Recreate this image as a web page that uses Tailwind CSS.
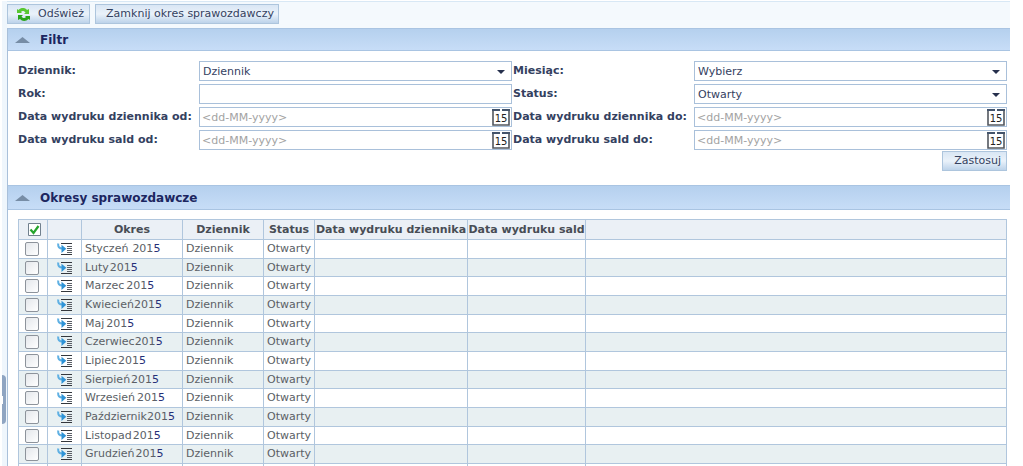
<!DOCTYPE html>
<html lang="pl">
<head>
<meta charset="utf-8">
<title>Okresy sprawozdawcze</title>
<script src="https://cdn.jsdelivr.net/npm/@tailwindcss/browser@4"></script>
</head>
<body class="h-screen overflow-hidden bg-white pt-px pr-[13px] pl-[2px] font-['DejaVu_Sans',sans-serif] text-[11px] leading-[14px] text-[#34415f]">
<svg class="hidden">
  <symbol id="details" viewBox="0 0 16 14">
    <path d="M4 1.500h11M4 12.500h11" stroke="#33373d" stroke-width="1"/>
    <path d="M10 4.500h5M10 6.500h5M10 8.500h5M10 10.500h5" stroke="#5a5f66" stroke-width="1"/>
    <path d="M1.300 1.500Q.5 6.500 5.500 6.500" fill="none" stroke="#5fb0e3" stroke-width="2"/>
    <path d="M4.500 2.800 9.300 6.700 4.500 11z" fill="#2f93d6"/>
  </symbol>
  <symbol id="calendar" viewBox="0 0 18 18">
    <path d="M1 2h16v15H1z" fill="#fff" stroke="#53585f" stroke-width="1.600"/>
    <path d="M0 1h8v2H0zM10 1h8v2h-8z" fill="#44546b"/>
    <path d="M8 0h2v3H8z" fill="#fff"/>
    <text x="9" y="14" text-anchor="middle" font-family="DejaVu Sans" font-size="10" fill="#222">15</text>
  </symbol>
  <symbol id="caret" viewBox="0 0 8 4"><path d="M0 0h8L4 4z" fill="#26304d"/></symbol>
</svg>
<div class="relative flex h-full flex-col border-l-[5px] border-[#eff6fc]">
  <button type="button" aria-label="Zwiń panel" class="absolute top-[374px] -left-[5px] flex h-[49px] w-[4px] items-center rounded-r-sm bg-[#8fa5c2]"><span class="h-[8px] w-px bg-white"></span></button>
  <div class="flex h-[27px] shrink-0 gap-[5px] border-t border-[#d8e8f5] bg-[#f4f9fd] pt-[2px]">
    <button type="button" class="flex h-[20px] w-[83px] items-center border border-[#adc5dd] bg-linear-to-b from-[#d9e6f4] via-[#eaf2fa] to-[#bdd3ea] pl-[9px]">
      <svg class="mr-[8px] h-[13px] w-[13px] shrink-0" viewBox="0 0 13 13"><path d="M0 5V1l1.500 1C4-.6 8-.4 10 2l2-1v5H7l1.500-1.500C7 2.500 5 2.500 4 4l1 1z" fill="#58c832"/><path d="M13 8v4l-1.500-1C9 13.600 5 13.400 3 11l-2 1V7h5L4.500 8.500C6 10.500 8 10.500 9 9L8 8z" fill="#2ba51c"/></svg>Odśwież
    </button>
    <button type="button" class="h-[20px] w-[184px] border border-[#adc5dd] bg-linear-to-b from-[#d9e6f4] via-[#eaf2fa] to-[#bdd3ea] pl-[6px] whitespace-nowrap">Zamknij okres sprawozdawczy</button>
  </div>
  <main class="min-h-0 flex-1 border-l border-[#a9c0da]">
    <section>
      <h2 class="flex h-[23px] items-center border-y border-[#a9c4e2] bg-linear-to-b from-[#b5d0ee] to-[#c7ddf7] pl-[7px] text-[12px] font-bold text-[#1c2660]">
        <svg class="mr-[10px] h-[6px] w-[15px]" viewBox="0 0 15 6"><path d="M0 6 7.500 0 15 6z" fill="#778da6"/></svg>Filtr
      </h2>
      <form class="pt-[10px] pr-[3px] pb-[14px] pl-[10px]">
        <div class="grid grid-cols-[181px_1fr_182px_1fr] gap-y-[3px]">
          <label for="journal" class="pt-[3px] font-bold">Dziennik:</label>
          <div class="relative"><select id="journal" class="block h-[20px] w-full appearance-none border border-[#a9c0da] bg-white px-[3px] pt-[2px]"><option>Dziennik</option></select><svg class="pointer-events-none absolute top-[9px] right-[7px] h-[4px] w-[8px]"><use href="#caret"/></svg></div>
          <label for="month" class="pt-[3px] pl-px font-bold">Miesiąc:</label>
          <div class="relative"><select id="month" class="block h-[20px] w-full appearance-none border border-[#a9c0da] bg-white px-[3px] pt-[2px]"><option>Wybierz</option></select><svg class="pointer-events-none absolute top-[9px] right-[7px] h-[4px] w-[8px]"><use href="#caret"/></svg></div>
          <label for="year" class="pt-[3px] font-bold">Rok:</label>
          <input id="year" type="text" class="h-[20px] w-full border border-[#a9c0da] px-[3px]">
          <label for="status" class="pt-[3px] pl-px font-bold">Status:</label>
          <div class="relative"><select id="status" class="block h-[20px] w-full appearance-none border border-[#a9c0da] bg-white px-[3px] pt-[2px]"><option>Otwarty</option></select><svg class="pointer-events-none absolute top-[9px] right-[7px] h-[4px] w-[8px]"><use href="#caret"/></svg></div>
          <label for="jfrom" class="pt-[3px] font-bold">Data wydruku dziennika od:</label>
          <div class="flex h-[20px] items-center border border-[#a9c0da]"><input id="jfrom" type="text" placeholder="&lt;dd-MM-yyyy&gt;" class="min-w-0 flex-1 pt-px pl-[2px] placeholder:text-[#a3a3a3]"><button type="button" aria-label="Kalendarz" class="mr-px"><svg class="block h-[18px] w-[18px]"><use href="#calendar"/></svg></button></div>
          <label for="jto" class="pt-[3px] pl-px font-bold">Data wydruku dziennika do:</label>
          <div class="flex h-[20px] items-center border border-[#a9c0da]"><input id="jto" type="text" placeholder="&lt;dd-MM-yyyy&gt;" class="min-w-0 flex-1 pt-px pl-[2px] placeholder:text-[#a3a3a3]"><button type="button" aria-label="Kalendarz" class="mr-px"><svg class="block h-[18px] w-[18px]"><use href="#calendar"/></svg></button></div>
          <label for="bfrom" class="pt-[3px] font-bold">Data wydruku sald od:</label>
          <div class="flex h-[20px] items-center border border-[#a9c0da]"><input id="bfrom" type="text" placeholder="&lt;dd-MM-yyyy&gt;" class="min-w-0 flex-1 pt-px pl-[2px] placeholder:text-[#a3a3a3]"><button type="button" aria-label="Kalendarz" class="mr-px"><svg class="block h-[18px] w-[18px]"><use href="#calendar"/></svg></button></div>
          <label for="bto" class="pt-[3px] pl-px font-bold">Data wydruku sald do:</label>
          <div class="flex h-[20px] items-center border border-[#a9c0da]"><input id="bto" type="text" placeholder="&lt;dd-MM-yyyy&gt;" class="min-w-0 flex-1 pt-px pl-[2px] placeholder:text-[#a3a3a3]"><button type="button" aria-label="Kalendarz" class="mr-px"><svg class="block h-[18px] w-[18px]"><use href="#calendar"/></svg></button></div>
        </div>
        <button type="submit" class="mt-px ml-auto block h-[20px] border border-[#adc5dd] bg-linear-to-b from-[#d9e6f4] via-[#eaf2fa] to-[#bdd3ea] pr-[5px] pl-[11px]">Zastosuj</button>
      </form>
    </section>
    <section>
      <h2 class="flex h-[25px] items-center border-y border-[#a9c4e2] bg-linear-to-b from-[#b5d0ee] to-[#c7ddf7] pl-[7px] text-[12px] font-bold text-[#1c2660]">
        <svg class="mr-[10px] h-[6px] w-[15px]" viewBox="0 0 15 6"><path d="M0 6 7.500 0 15 6z" fill="#778da6"/></svg>Okresy sprawozdawcze
      </h2>
      <div class="pt-[9px] pr-[3px] pl-[10px]">
        <table class="w-full table-fixed border-separate border-spacing-0 border-t border-l border-[#b0c6dd] text-[#5b5f66] [&_td]:border-r [&_td]:border-b [&_td]:border-[#b0c6dd] [&_td]:p-0 [&_td]:pl-[3px] [&_td]:whitespace-nowrap [&_th]:border-r [&_th]:border-b [&_th]:border-[#b0c6dd] [&_th]:p-0 [&_th]:whitespace-nowrap">
          <colgroup><col class="w-[29px]"><col class="w-[34px]"><col class="w-[101px]"><col class="w-[81px]"><col class="w-[51px]"><col class="w-[153px]"><col class="w-[118px]"><col></colgroup>
          <thead><tr class="h-[20px] bg-[#ebf0f6] text-[#484d55]">
            <th><label class="flex justify-center pl-[2px]"><input type="checkbox" checked aria-label="Zaznacz wszystkie okresy" class="sr-only"><svg class="h-[13px] w-[13px]" viewBox="0 0 13 13"><path d="M.5.5h12v12H.5z" fill="#fff" stroke="#71808e"/><path d="m2.500 6.500 3 3.500 5-7" fill="none" stroke="#25a42c" stroke-width="2.200"/></svg></label></th>
            <th></th><th>Okres</th><th>Dziennik</th><th>Status</th><th>Data wydruku dziennika</th><th>Data wydruku sald</th><th></th>
          </tr></thead>
          <tbody id="rows"></tbody>
        </table>
      </div>
    </section>
  </main>
</div>
<script>
const months = [['Styczeń', 'ml-[4px]'], ['Luty', 'ml-px'], ['Marzec', 'ml-[2px]'], ['Kwiecień', ''], ['Maj', 'ml-[2px]'], ['Czerwiec', ''], ['Lipiec', 'ml-px'], ['Sierpień', 'ml-px'], ['Wrzesień', 'ml-[2px]'], ['Październik', ''], ['Listopad', 'ml-px'], ['Grudzień', 'ml-px']];
document.getElementById('rows').innerHTML = months.map(([m, gap]) => `
<tr class="h-[19px] even:bg-[#e8f0f2] nth-[3n+2]:h-[18px]">
<td><input type="checkbox" aria-label="${m} 2015" class="ml-[3px] block h-[14px] w-[14px] appearance-none rounded-[2px] border border-[#8d939b] bg-linear-to-br from-[#e4e7eb] to-white checked:bg-[#25a42c]"></td>
<td><button type="button" aria-label="Szczegóły: ${m} 2015" class="ml-[6px] block"><svg class="block h-[14px] w-[16px]"><use href="#details"/></svg></button></td>
<td>${m}<span class="${gap}">201<span class="text-[#262f78]">5</span></span></td><td>Dziennik</td><td>Otwarty</td><td></td><td></td><td></td></tr>`).join('') +
'<tr class="h-[19px]"><td></td><td></td><td></td><td></td><td></td><td></td><td></td><td></td></tr>';
</script>
</body>
</html>
